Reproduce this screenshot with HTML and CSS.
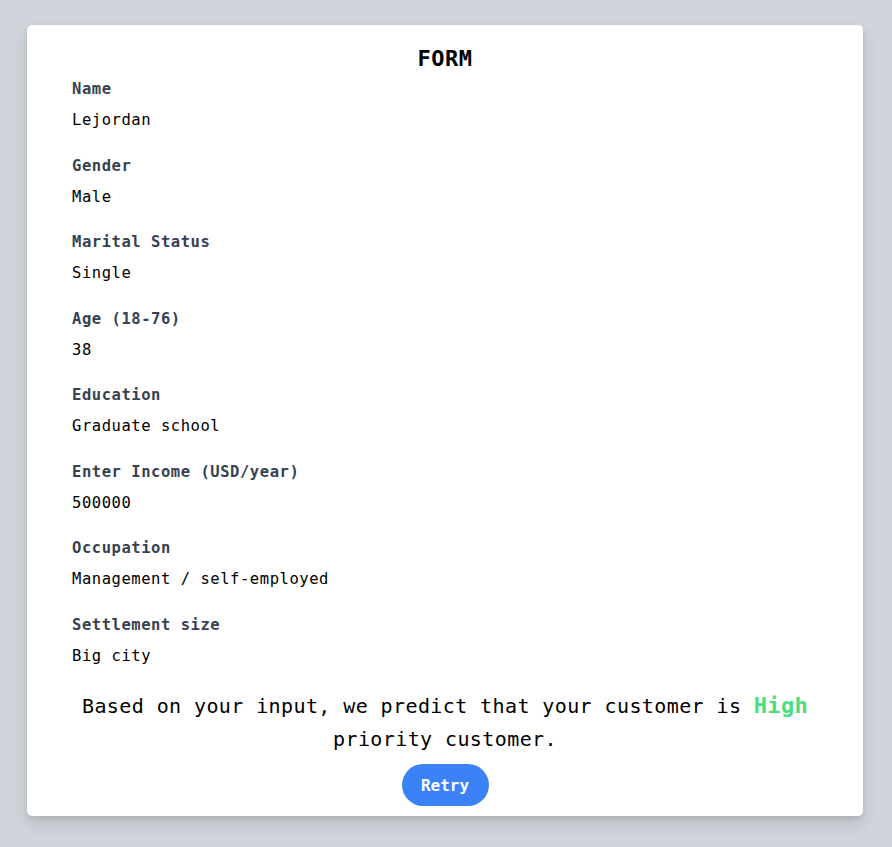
FILE: index.html
```html
<!DOCTYPE html>
<html>
<head>
<meta charset="utf-8">
<link rel="stylesheet" href="styles.css">
</head>
<body>
<div class="card">
  <h1 class="title">FORM</h1>
  <div class="fields">
    <div class="field"><div class="label">Name</div><div class="value">Lejordan</div></div>
    <div class="field"><div class="label">Gender</div><div class="value">Male</div></div>
    <div class="field"><div class="label">Marital Status</div><div class="value">Single</div></div>
    <div class="field"><div class="label">Age (18-76)</div><div class="value">38</div></div>
    <div class="field"><div class="label">Education</div><div class="value">Graduate school</div></div>
    <div class="field"><div class="label">Enter Income (USD/year)</div><div class="value">500000</div></div>
    <div class="field"><div class="label">Occupation</div><div class="value">Management / self-employed</div></div>
    <div class="field"><div class="label">Settlement size</div><div class="value">Big city</div></div>
  </div>
  <p class="result">Based on your input, we predict that your customer is <span class="high">High</span> priority customer.</p>
  <div class="actions"><button class="retry">Retry</button></div>
</div>
</body>
</html>
```
FILE: styles.css
```css
html, body {
  margin: 0;
  padding: 0;
}
body {
  background: #d1d5db;
  font-family: "DejaVu Sans Mono", "Liberation Mono", monospace;
  padding-top: 25px;
  height: 847px;
  box-sizing: border-box;
}
.card {
  width: 836px;
  margin: 0 0 0 27px;
  background: #fff;
  border-radius: 5px;
  box-shadow: 0 8px 16px rgba(0,0,0,0.12), 0 2px 4px rgba(0,0,0,0.08);
  padding: 18px 45px 10px 45px;
  box-sizing: border-box;
}
.title {
  margin: 0 0 2px 0;
  text-align: center;
  font-size: 22px;
  line-height: 32px;
  font-weight: bold;
  color: #000;
  letter-spacing: 0.5px;
}
.fields {
  display: flex;
  flex-direction: column;
  gap: 21.5px;
}
.field {
  display: flex;
  flex-direction: column;
  gap: 7px;
}
.label {
  font-size: 15.5px;
  line-height: 24px;
  font-weight: bold;
  color: #374151;
  letter-spacing: 0.55px;
}
.value {
  font-size: 15.5px;
  line-height: 24px;
  color: #000;
  letter-spacing: 0.55px;
}
.result {
  margin: 21px 0 0 0;
  text-align: center;
  font-size: 20px;
  line-height: 33px;
  color: #000;
  letter-spacing: 0.4px;
}
.high {
  color: #4ade80;
  font-weight: bold;
  font-size: 22px;
  letter-spacing: 0.3px;
}
.actions {
  display: flex;
  justify-content: center;
  margin-top: 8.5px;
}
.retry {
  width: 87px;
  height: 42px;
  border: none;
  border-radius: 21px;
  background: #3b82f6;
  color: #fff;
  font-family: "DejaVu Sans Mono", "Liberation Mono", monospace;
  font-weight: bold;
  font-size: 16px;
  padding: 0;
}
```
